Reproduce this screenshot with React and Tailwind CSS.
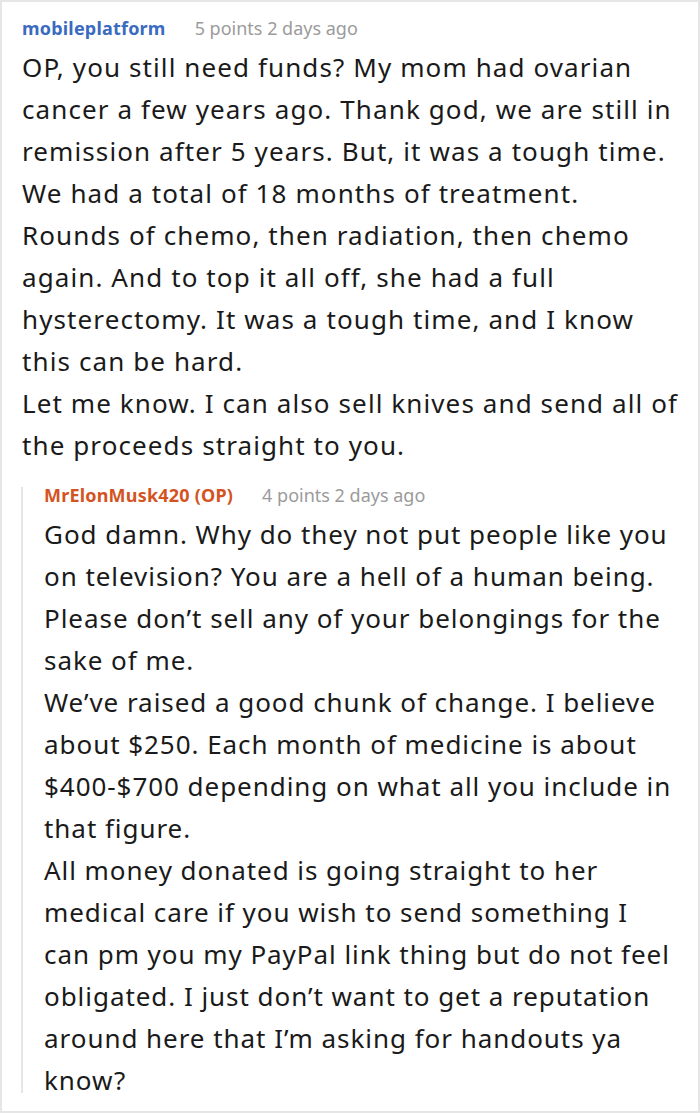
import React from 'react';

// --- Comment header ---
const CommentHeader = ({ author, isOp, points, age }) => (
    <div className="flex items-baseline gap-[29px] leading-[16px]">
        <span className={`font-bold text-[18px] tracking-[0.2px] ${isOp ? 'text-[#d4541f]' : 'text-[#3a6bbf]'}`}>
            {author}{isOp && ' (OP)'}
        </span>
        <span className="text-[18px] text-[#9b9b9b]">{points} points {age}</span>
    </div>
);

// each paragraph is a list of lines, kept as in the screenshot
const Body = ({ paragraphs, tracking }) => (
    <div className={`mt-[10px] text-[26px] leading-[42px] text-[#1a1a1a] whitespace-nowrap ${tracking}`}>
        {paragraphs.map((lines, i) => (
            <p key={i}>
                {lines.map((line) => (
                    <span key={line} className="block">{line}</span>
                ))}
            </p>
        ))}
    </div>
);

const parent = [
    [
        "OP, you still need funds? My mom had ovarian",
        "cancer a few years ago. Thank god, we are still in",
        "remission after 5 years. But, it was a tough time.",
        "We had a total of 18 months of treatment.",
        "Rounds of chemo, then radiation, then chemo",
        "again. And to top it all off, she had a full",
        "hysterectomy. It was a tough time, and I know",
        "this can be hard.",
    ],
    [
        "Let me know. I can also sell knives and send all of",
        "the proceeds straight to you.",
    ],
];

const reply = [
    [
        "God damn. Why do they not put people like you",
        "on television? You are a hell of a human being.",
        "Please don\u2019t sell any of your belongings for the",
        "sake of me.",
    ],
    [
        "We\u2019ve raised a good chunk of change. I believe",
        "about $250. Each month of medicine is about",
        "$400-$700 depending on what all you include in",
        "that figure.",
    ],
    [
        "All money donated is going straight to her",
        "medical care if you wish to send something I",
        "can pm you my PayPal link thing but do not feel",
        "obligated. I just don\u2019t want to get a reputation",
        "around here that I\u2019m asking for handouts ya",
        "know?",
    ],
];

export default function App() {
    return (
        <div className="w-[700px] h-[1113px] bg-white border-2 border-[#e6e6e6] overflow-hidden" style={{ fontFamily: '"Noto Sans", "Open Sans", sans-serif' }}>
            <div className="pl-[20px] pr-[20px] pt-[18px]">
                <CommentHeader author="mobileplatform" points={5} age="2 days ago" />
                <Body paragraphs={parent} tracking="tracking-[1.1px]" />

                <div className="mt-[21px] -ml-px border-l-2 border-[#e6e6e6] pl-[21px] h-[606px]">
                    <CommentHeader author="MrElonMusk420" isOp points={4} age="2 days ago" />
                    <Body paragraphs={reply} tracking="tracking-[0.95px]" />
                </div>
            </div>
        </div>
    );
}
